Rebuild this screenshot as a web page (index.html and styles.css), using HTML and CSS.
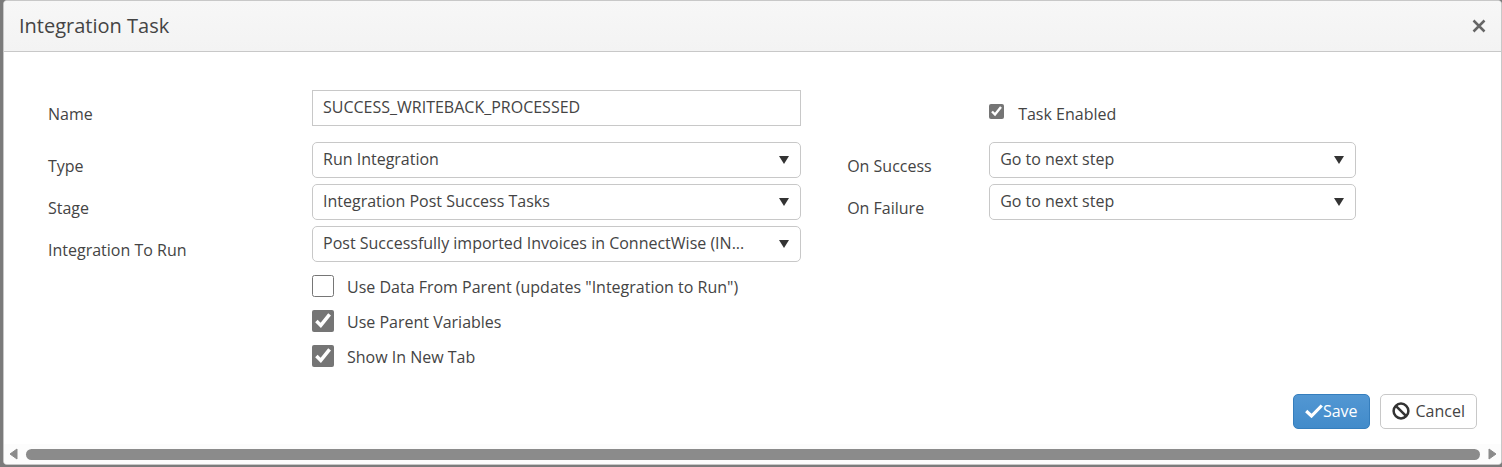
FILE: index.html
```html
<!DOCTYPE html>
<html lang="en">
<head>
<meta charset="utf-8">
<title>Integration Task</title>
<link rel="stylesheet" href="styles.css">
</head>
<body>
<div class="dialog" role="dialog" aria-labelledby="dialog-title">
  <header class="titlebar">
    <h1 class="title" id="dialog-title">Integration Task</h1>
    <button class="close" type="button" aria-label="Close">
      <svg width="14" height="14" viewBox="0 0 14 14"><path d="M1.5 1.5L12.5 12.5M12.5 1.5L1.5 12.5" stroke="#666" stroke-width="2.5" fill="none"/></svg>
    </button>
  </header>
  <form class="form">
    <div class="grid">
      <label class="label" for="name">Name</label>
      <input class="field name-field" id="name" type="text" value="SUCCESS_WRITEBACK_PROCESSED">
      <div class="enabled">
        <input class="check-small" id="enabled" type="checkbox" checked>
        <label for="enabled">Task Enabled</label>
      </div>

      <label class="label" for="type">Type</label>
      <div class="picker">
        <select class="field select" id="type"><option>Run Integration</option></select>
        <svg class="arrow" width="10" height="8" viewBox="0 0 10 8"><path d="M0 0H10L5 8Z" fill="#333"/></svg>
      </div>
      <label class="label label-right" for="success">On Success</label>
      <div class="picker">
        <select class="field select" id="success"><option>Go to next step</option></select>
        <svg class="arrow" width="10" height="8" viewBox="0 0 10 8"><path d="M0 0H10L5 8Z" fill="#333"/></svg>
      </div>

      <label class="label" for="stage">Stage</label>
      <div class="picker">
        <select class="field select" id="stage"><option>Integration Post Success Tasks</option></select>
        <svg class="arrow" width="10" height="8" viewBox="0 0 10 8"><path d="M0 0H10L5 8Z" fill="#333"/></svg>
      </div>
      <label class="label label-right" for="failure">On Failure</label>
      <div class="picker">
        <select class="field select" id="failure"><option>Go to next step</option></select>
        <svg class="arrow" width="10" height="8" viewBox="0 0 10 8"><path d="M0 0H10L5 8Z" fill="#333"/></svg>
      </div>

      <label class="label" for="integration">Integration To Run</label>
      <div class="picker">
        <select class="field select" id="integration"><option>Post Successfully imported Invoices in ConnectWise (IN...</option></select>
        <svg class="arrow" width="10" height="8" viewBox="0 0 10 8"><path d="M0 0H10L5 8Z" fill="#333"/></svg>
      </div>

      <div class="options">
        <div class="option"><input class="check" id="parent-data" type="checkbox"><label for="parent-data">Use Data From Parent (updates "Integration to Run")</label></div>
        <div class="option"><input class="check" id="parent-vars" type="checkbox" checked><label for="parent-vars">Use Parent Variables</label></div>
        <div class="option"><input class="check" id="new-tab" type="checkbox" checked><label for="new-tab">Show In New Tab</label></div>
      </div>
    </div>
    <div class="actions">
      <button class="button save" type="button">
        <svg width="18" height="14" viewBox="0 0 18 14"><path d="M1.2 7L6.5 12L16.8 1.5" stroke="#fff" stroke-width="3.2" fill="none"/></svg>Save
      </button>
      <button class="button cancel" type="button">
        <svg width="18" height="18" viewBox="0 0 18 18"><circle cx="9" cy="9" r="7.4" stroke="#333" stroke-width="2.5" fill="none"/><path d="M3.8 3.8L14.2 14.2" stroke="#333" stroke-width="2.5"/></svg>Cancel
      </button>
    </div>
  </form>
  <div class="scrollbar">
    <svg width="9" height="12" viewBox="0 0 9 12"><path d="M8 1V11L1 6Z" fill="#8b8b8b" stroke="#8b8b8b" stroke-linejoin="round"/></svg>
    <div class="thumb"></div>
    <svg width="9" height="12" viewBox="0 0 9 12"><path d="M1 1V11L8 6Z" fill="#8b8b8b" stroke="#8b8b8b" stroke-linejoin="round"/></svg>
  </div>
</div>
</body>
</html>
```
FILE: styles.css
```css
* { box-sizing: border-box; }

body {
  margin: 0;
  padding: 0 0 2px 3px;
  background: #7b7b7b;
  color: #444;
  font: 16px/24px "Open Sans", sans-serif;
}

.dialog {
  overflow: hidden;
  border: 1px solid #c8c8c8;
  border-radius: 4px;
  background: #fff;
}

.titlebar {
  display: flex;
  align-items: center;
  justify-content: space-between;
  height: 51px;
  padding: 0 15px;
  border-bottom: 1px solid #c8c8c8;
  background: linear-gradient(#f7f7f7, #f3f3f3);
}

.title {
  margin: 0;
  font-size: 20px;
  font-weight: 400;
}

.close {
  display: flex;
  padding: 0;
  border: 0;
  background: none;
}

.form { padding: 38px 24px 15px 44px; }

.grid {
  display: grid;
  grid-template-columns: 264px 4fr 46px 142px 3fr;
  row-gap: 6px;
  margin-right: 121px;
}

.label {
  grid-column: 1;
  padding-top: 12px;
  line-height: 24px;
}

.label-right { grid-column: 4; }

.field {
  width: 100%;
  height: 36px;
  padding: 0 10px 2px;
  border: 1px solid #c8c8c8;
  border-radius: 5px;
  background: #fff;
  color: #444;
  font: inherit;
}

.name-field {
  margin-bottom: 10px;
  border-radius: 0;
}

.picker { position: relative; height: 36px; }

.select { appearance: none; }

.arrow {
  position: absolute;
  top: 14px;
  right: 12px;
  pointer-events: none;
}

.enabled {
  grid-column: 5;
  display: flex;
  gap: 14px;
  padding-top: 12px;
}

.check,
.check-small {
  margin: 0;
  accent-color: #757575;
}

.check-small { width: 15px; height: 15px; margin-top: 2px; }

.check { width: 22px; height: 22px; }

.options {
  grid-column: 2;
  display: grid;
  gap: 11px;
  padding-top: 7px;
}

.option {
  display: flex;
  gap: 13px;
  align-items: flex-start;
  height: 24px;
}

.actions {
  display: flex;
  justify-content: flex-end;
  gap: 10px;
  margin-top: 25px;
}

.button {
  display: flex;
  align-items: center;
  height: 35px;
  padding: 0 11px 1px;
  border: 1px solid #c8c8c8;
  border-radius: 5px;
  background: #fff;
  color: #444;
  font: inherit;
}

.save {
  border-color: #357ebd;
  background: linear-gradient(#5297d3, #428bca);
  color: #fff;
}

.cancel { gap: 6px; }

.scrollbar {
  display: flex;
  align-items: center;
  gap: 8px;
  height: 20px;
  padding: 0 4px 0 5px;
  background: #fcfcfc;
}

.thumb {
  flex: 1;
  height: 11px;
  border-radius: 6px;
  background: #8b8b8b;
}
```
